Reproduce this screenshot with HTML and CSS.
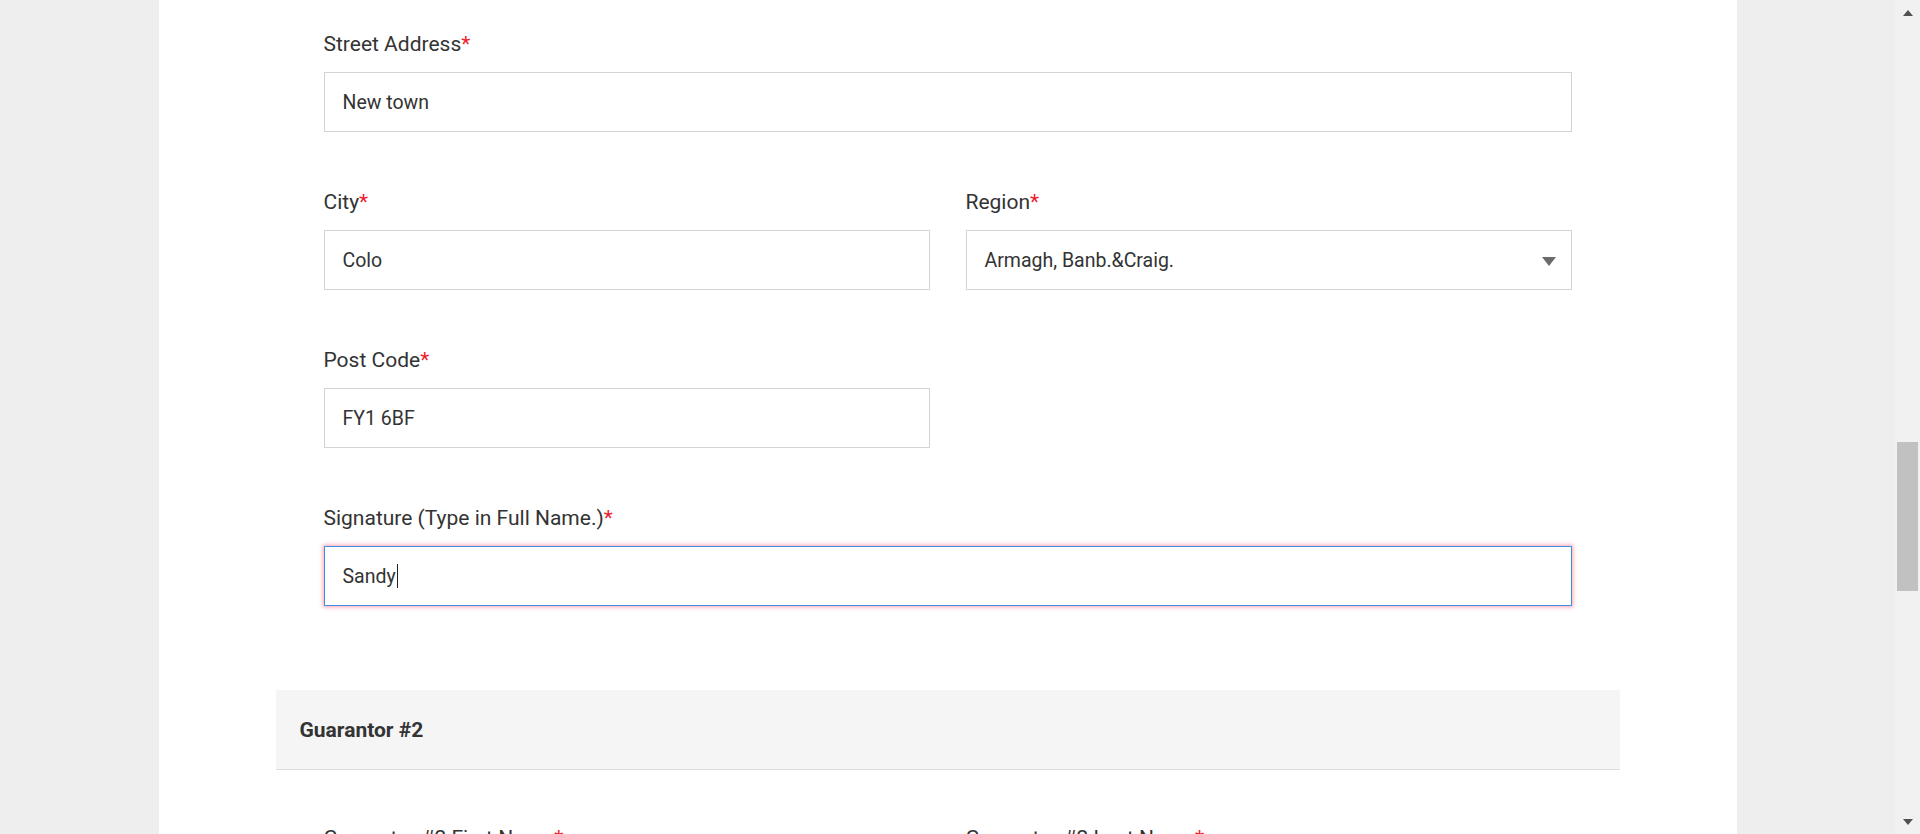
FILE: index.html
```html
<!DOCTYPE html>
<html lang="en">
<head>
<meta charset="utf-8">
<title>Guarantor form</title>
<link rel="stylesheet" href="styles.css">
</head>
<body>
<div class="viewport">
  <main class="page">
    <div class="panel">
      <div class="form">
        <div class="row">
          <div class="group">
            <div class="label">Street Address<span class="req">*</span></div>
            <div class="field">New town</div>
          </div>
        </div>
        <div class="row two">
          <div class="group">
            <div class="label">City<span class="req">*</span></div>
            <div class="field">Colo</div>
          </div>
          <div class="group">
            <div class="label">Region<span class="req">*</span></div>
            <div class="field select">Armagh, Banb.&amp;Craig.<span class="arrow"></span></div>
          </div>
        </div>
        <div class="row two">
          <div class="group">
            <div class="label">Post Code<span class="req">*</span></div>
            <div class="field">FY1 6BF</div>
          </div>
        </div>
        <div class="row">
          <div class="group">
            <div class="label">Signature (Type in Full Name.)<span class="req">*</span></div>
            <div class="field focused">Sandy<span class="caret"></span></div>
          </div>
        </div>
      </div>
      <div class="section-head">Guarantor #2</div>
      <div class="form form-next">
        <div class="row two">
          <div class="group">
            <div class="label">Guarantor #2 First Name<span class="req">*</span></div>
          </div>
          <div class="group">
            <div class="label">Guarantor #2 Last Name<span class="req">*</span></div>
          </div>
        </div>
      </div>
    </div>
  </main>
  <div class="scrollbar">
    <div class="sb-btn"><span class="sb-up"></span></div>
    <div class="sb-track"><div class="sb-thumb"></div></div>
    <div class="sb-btn"><span class="sb-down"></span></div>
  </div>
</div>
</body>
</html>
```
FILE: styles.css
```css
* { box-sizing: border-box; }
html, body {
  margin: 0;
  padding: 0;
  height: 834px;
  overflow: hidden;
}
body {
  font-family: Roboto, "Liberation Sans", Arial, sans-serif;
  color: #333333;
  background: #eeeeee;
}
.viewport {
  display: flex;
  height: 834px;
}
.page {
  flex: 1;
  display: flex;
  justify-content: center;
  background: #eeeeee;
  overflow: hidden;
}
.panel {
  width: 1578px;
  background: #ffffff;
  padding: 0 117px;
}
.form {
  padding: 32px 48px 26px;
}
.row {
  display: grid;
  grid-template-columns: 1fr;
  margin-bottom: 58px;
}
.row:last-child {
  margin-bottom: 58px;
}
.row.two {
  grid-template-columns: 1fr 1fr;
  column-gap: 36px;
}
.label {
  font-size: 21px;
  line-height: 24px;
  color: #333333;
  margin-bottom: 16px;
  white-space: nowrap;
}
.req { color: #ee1c2e; }
.field {
  position: relative;
  height: 60px;
  border: 1px solid #d3d3d3;
  background: #ffffff;
  padding: 0 18px;
  display: flex;
  align-items: center;
  font-size: 19.5px;
  color: #333333;
}
.field.focused {
  border-color: #3d8fe0;
  box-shadow: 0 0 4px 1px rgba(250, 70, 100, 0.5);
}
.caret {
  display: inline-block;
  width: 1px;
  height: 24px;
  background: #222222;
  margin-left: 1px;
}
.arrow {
  position: absolute;
  right: 15px;
  top: 26px;
  width: 0;
  height: 0;
  border-left: 7px solid transparent;
  border-right: 7px solid transparent;
  border-top: 9px solid #6b6b6b;
}
.section-head {
  height: 80px;
  background: #f5f5f5;
  border-bottom: 1px solid #dddddd;
  padding: 0 24px;
  display: flex;
  align-items: center;
  font-size: 21px;
  font-weight: 700;
  color: #333333;
}
.form-next {
  padding-top: 56px;
}
.scrollbar {
  width: 25px;
  background: #f1f1f1;
  display: flex;
  flex-direction: column;
}
.sb-btn {
  height: 25px;
  display: flex;
  justify-content: center;
  align-items: center;
}
.sb-up {
  width: 0; height: 0;
  border-left: 5px solid transparent;
  border-right: 5px solid transparent;
  border-bottom: 6px solid #505050;
}
.sb-down {
  width: 0; height: 0;
  border-left: 5px solid transparent;
  border-right: 5px solid transparent;
  border-top: 6px solid #505050;
}
.sb-track {
  flex: 1;
  padding-top: 417px;
}
.sb-thumb {
  width: 21px;
  margin-left: 2px;
  height: 149px;
  background: #c1c1c1;
}
```
